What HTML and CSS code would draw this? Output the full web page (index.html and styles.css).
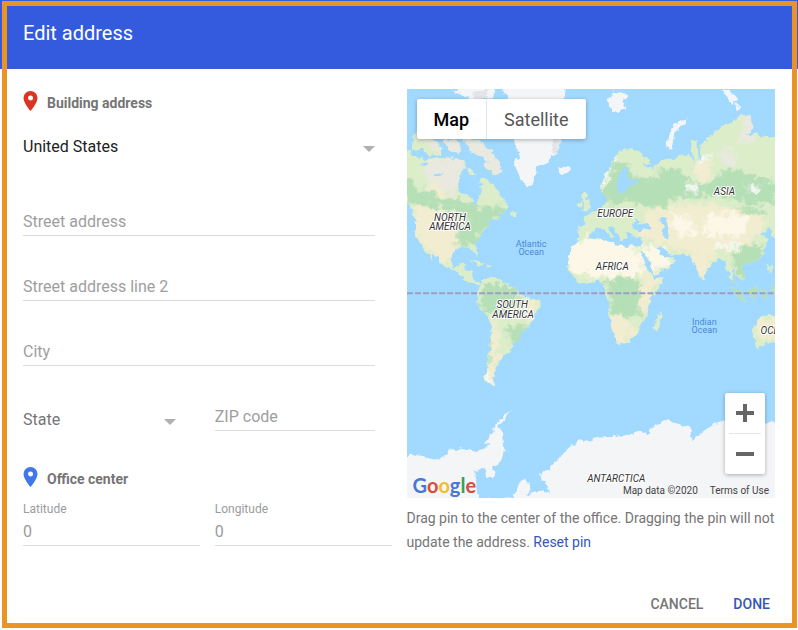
FILE: index.html
```html
<!DOCTYPE html>
<html lang="en">
<head>
<meta charset="utf-8">
<meta name="viewport" content="width=device-width, initial-scale=1">
<title>Edit address</title>
<link rel="stylesheet" href="styles.css">
</head>
<body>
<form class="dialog">
  <header class="dialog-header"><h1>Edit address</h1></header>
  <div class="dialog-body">
    <div class="fields">
      <h2 class="section-title">
        <svg class="pin pin-red" viewBox="0 0 14 20" aria-hidden="true"><path fill-rule="evenodd" d="M7 0a7 7 0 0 0-7 7c0 5 7 13 7 13s7-8 7-13a7 7 0 0 0-7-7Zm0 4.5a2.5 2.5 0 1 1 0 5 2.5 2.5 0 0 1 0-5Z"/></svg>
        Building address
      </h2>
      <div class="select country">
        <select aria-label="Country"><option>United States</option></select>
      </div>
      <div class="address-lines">
        <input class="line-input" type="text" aria-label="Street address" placeholder="Street address">
        <input class="line-input" type="text" aria-label="Street address line 2" placeholder="Street address line 2">
        <input class="line-input" type="text" aria-label="City" placeholder="City">
      </div>
      <div class="pair region">
        <div class="select state">
          <select aria-label="State"><option>State</option></select>
        </div>
        <input class="line-input zip" type="text" aria-label="ZIP code" placeholder="ZIP code">
      </div>
      <h2 class="section-title">
        <svg class="pin pin-blue" viewBox="0 0 14 20" aria-hidden="true"><path fill-rule="evenodd" d="M7 0a7 7 0 0 0-7 7c0 5 7 13 7 13s7-8 7-13a7 7 0 0 0-7-7Zm0 4.5a2.5 2.5 0 1 1 0 5 2.5 2.5 0 0 1 0-5Z"/></svg>
        Office center
      </h2>
      <div class="pair coords">
        <div class="coord"><label for="lat">Latitude</label><input class="line-input" id="lat" type="text" value="0"></div>
        <div class="coord"><label for="lng">Longitude</label><input class="line-input" id="lng" type="text" value="0"></div>
      </div>
    </div>

    <div class="location">
      <div class="map">
        <svg class="map-canvas" viewBox="407 89 368 408" role="img" aria-label="World map">
          <defs>
            <filter id="coast" filterUnits="userSpaceOnUse" x="395" y="77" width="392" height="432">
              <feTurbulence type="fractalNoise" baseFrequency="0.17" numOctaves="2" seed="4"/>
              <feDisplacementMap in="SourceGraphic" scale="7" xChannelSelector="R" yChannelSelector="G"/>
            </filter>
            <filter id="patch" x="-20%" y="-20%" width="140%" height="140%">
              <feGaussianBlur stdDeviation="1.6" result="soft"/>
              <feTurbulence type="fractalNoise" baseFrequency="0.13" numOctaves="3" seed="9" result="n"/>
              <feDisplacementMap in="soft" in2="n" scale="17" xChannelSelector="R" yChannelSelector="G"/>
            </filter>
            <clipPath id="land">
              <path d="M400 153L411 152 415 157 425 159 440 157 455 159 464 160 465 166 459 177 458 188 463 194 470 195 474 204 478 205 479 196 482 190 480 180 483 177 492 182 497 189 500 195 505 200 509 207 502 213 498 214 500 218 492 220 488 225 484 231 480 236 475 243 478 251 476 256 473 248 463 247 455 248 453 253 450 260 453 266 458 267 460 263 465 263 464 269 471 271 472 278 477 282 484 282 478 285 470 282 464 278 457 272 449 267 441 263 436 256 430 248 434 260 427 252 421 244 416 236 416 223 414 213 407 203 400 198Z"/>
              <path d="M480 284L486 278 492 277 500 279 508 284 517 290 523 297 532 298 541 302 540 307 535 313 532 321 528 328 522 332 520 339 515 343 510 351 503 355 499 361 497 367 494 374 493 380 496 386 489 385 485 377 487 370 488 358 490 340 492 326 489 318 483 311 477 303 477 295Z"/>
              <path d="M600 187L603 178 610 168 613 160 618 152 626 149 636 150 646 156 650 163 655 165 662 161 675 158 683 155 688 153 692 158 695 165 692 150 690 141 696 140 697 155 701 162 699 146 706 140 715 132 723 126 733 122 740 113 750 117 752 128 745 135 755 134 765 137 785 137 785 240 771 236 770 228 761 232 766 239 764 252 758 260 748 263 741 267 744 275 741 279 735 276 733 268 731 270 733 280 737 286 731 281 727 271 725 261 718 258 710 265 706 270 704 279 700 279 696 268 692 260 688 255 680 255 671 254 675 260 665 269 653 275 655 278 664 277 660 287 650 297 649 308 646 316 641 323 638 333 630 342 618 345 613 335 609 318 609 300 604 293 605 285 600 281 585 284 575 280 567 270 569 257 571 246 580 239 579 226 587 225 583 218 590 213 600 208 606 201 607 195 602 193Z"/>
              <path d="M583 211L590 209 588 200 585 190 581 195 584 203ZM577 203l5-2v6h-5ZM654 322L661 311 661 319 657 331 653 328ZM731 287L740 292 746 301 738 298ZM747 290L756 285 758 291 752 300ZM760 289h6l-2 3 2 5-4-1ZM751 330L757 320 765 315 790 313 790 341 765 344 756 348ZM767 263l5 5-2 4ZM771 286h10v9h-7ZM470 260l8 1 7 4-7-1ZM486 265h6v3h-5ZM509 212l7 0 0 4-7-1Z"/>
              <path d="M415 132L424 130 432 139 440 145 441 154 430 156 422 149 412 151 412 144ZM444 140L455 138 461 148 458 154 450 150ZM463 138L480 141 487 148 495 155 500 163 502 168 496 176 489 171 484 165 487 160 480 155 470 152ZM466 168l7 1 2 5-6 1Z"/>
            </clipPath>
          </defs>
          <rect class="water" x="407" y="89" width="368" height="408"/>
          <g filter="url(#coast)">
            <g clip-path="url(#land)">
              <rect class="grass" x="395" y="80" width="395" height="320"/>
              <g filter="url(#patch)">
                <path class="tundra" d="M424 160L462 158 463 180 456 196 440 188 427 181ZM408 128h100v45h-40ZM740 112h16v30h-16ZM720 149l16 2-3 14-13-5Z"/>
                <path class="forest" d="M400 176L419 187 445 197 478 206 508 208 500 220 485 230 474 245 456 247 460 225 470 216 436 208 400 198ZM618 160L629 167 634 178 653 179 660 168 681 169 689 182 713 181 730 168 760 176 776 184 776 205 735 201 716 194 673 199 660 207 622 202 606 204 603 187ZM490 282L517 288 522 302 507 313 486 311 478 299ZM607 280L632 279 647 292 648 311 630 320 611 315ZM744 244L764 245 758 265 739 277 732 258ZM729 279h50v23h-50ZM710 208h55v12h-35ZM505 325h25l-10 22-11-6ZM486 340l3 0-1 30-3-2Z"/>
                <path class="sand" d="M412 203L436 209 455 214 459 234 453 262 438 260 418 242ZM645 212L690 203 720 206 768 217 760 234 738 246 707 256 686 254 664 244 638 237ZM692 256l16-2 2 14-6 16-8-10ZM608 314l14-1 14 20-13 12h-12ZM640 275l22-3-10 18-6 26-8-4 3-20ZM490 322l8 0 1 25-4 38-7-1 3-30ZM524 300l15 1-10 22-8-10ZM752 318h27v20h-20ZM430 183l14 5-2 8-12-4ZM697 160l14 2-2 20-14-2Z"/>
                <path class="desert" d="M565 242L603 236 635 247 643 260 648 272 630 276 608 278 586 275 567 272ZM640 245L661 247 673 256 660 270 651 272ZM668 216h24l4 22-20-4ZM705 215l44-1-8 22-34 1Z"/>
                <path class="snow" d="M600 179L611 161 617 153 613 168 604 182ZM716 244l23 0-2 4-23-1ZM485 374l5 0 3 12h-6ZM697 158l12-4 0 5-10 5ZM746 187l14-3-2 7-12 1ZM684 185l14 0-3 5-11 0Z"/>
              </g>
            </g>
            <path class="water" d="M616 193L617 182 622 170 627 167 627 175 632 181 639 181 630 185 624 192ZM588 237L592 232 597 227 603 229 611 238 614 237 608 227 612 226 620 235 621 240 626 238 625 232 631 232 633 236 641 237 641 246 632 246 615 245 606 240 598 238ZM631 228L634 220 639 224 645 222 653 226 648 229 638 230ZM660 218l6-2 2 9-1 12-5-1 1-9ZM640 250l4 1 9 22 1 4-6-6ZM657 246l4 2 9 7 4 1-8 3-6-6ZM644 165l9-1-1 6-6-2ZM421 162l7 1-3 4-5-1ZM434 174l8-2-2 4-6 0Z"/>
            <path class="ice" d="M500 80L566 80 565 95 558 110 560 139 558 150 552 157 545 164 538 167 534 175 532 183 528 186 521 180 518 173 514 164 520 155 517 151 513 139 510 105ZM558 167L562 166 567 165 571 169 566 174 560 174ZM607 98L615 92 628 94 622 101 624 108 617 115 611 109ZM666 146L668 135 675 124 688 117 681 126 674 134 671 149ZM722 88l8 2 6 10-4 5-7-9ZM735 102l6 5-5 4ZM453 91l14-4 28 0-2 10-24 2Z"/>
            <path class="ice-shade" d="M553 134l6 3-1 15-6 1ZM475 90h15l-9 10h-10Z"/>
            <path class="ice" d="M400 457L412 453 425 457 435 459 447 456 449 449 460 448 475 451 486 449 490 442 484 444 492 431 496 424 504 415 511 409 506 417 498 425 503 434 504 448 500 462 492 467 496 474 493 479 486 477 484 470 475 471 477 488 486 497 497 497 508 499 515 492 521 480 527 477 530 487 526 496 535 491 543 490 549 494 547 485 541 480 541 473 550 467 560 456 570 446 579 440 590 440 600 436 625 435 638 432 647 434 655 425 667 420 680 424 690 427 691 440 700 433 712 424 725 421 740 424 790 421 790 515 400 515Z"/>
            <path class="water" d="M477 468l8 1 1 7-8-1ZM490 481l7-3-2 5-6 3ZM476 484L488 486 500 492 512 494 514 499 478 499Z"/>
          </g>
          <path class="equator" d="M407 293H775"/>
          <g class="continent">
            <text x="450" y="221">NORTH</text><text x="450" y="230">AMERICA</text>
            <text x="512" y="308">SOUTH</text><text x="513" y="318">AMERICA</text>
            <text x="615" y="217">EUROPE</text><text x="724" y="195">ASIA</text>
            <text x="612" y="270">AFRICA</text><text x="616" y="481">ANTARCTICA</text>
            <text class="cut" x="760" y="334">OCEANIA</text>
          </g>
          <g class="ocean">
            <text x="531" y="247">Atlantic</text><text x="531" y="255">Ocean</text>
            <text x="704" y="325">Indian</text><text x="704" y="333">Ocean</text>
          </g>
        </svg>
        <div class="map-types">
          <button class="map-type active" type="button">Map</button>
          <button class="map-type" type="button">Satellite</button>
        </div>
        <div class="zoom">
          <button type="button" aria-label="Zoom in"><svg viewBox="0 0 18 18"><path d="M7 0h4v7h7v4h-7v7H7v-7H0V7h7Z"/></svg></button>
          <button type="button" aria-label="Zoom out"><svg viewBox="0 0 18 18"><path d="M0 7h18v4H0Z"/></svg></button>
        </div>
        <div class="brand"><span class="g-blue">G</span><span class="g-red">o</span><span class="g-yellow">o</span><span class="g-blue">g</span><span class="g-green">l</span><span class="g-red">e</span></div>
        <div class="credits"><span>Map data ©2020</span><a href="#">Terms of Use</a></div>
      </div>
      <p class="hint">Drag pin to the center of the office. Dragging the pin will not update the address. <a href="#">Reset pin</a></p>
    </div>
  </div>
  <footer class="actions">
    <button class="action" type="button">CANCEL</button>
    <button class="action primary" type="submit">DONE</button>
  </footer>
</form>
</body>
</html>
```

FILE: styles.css
```css
* { box-sizing: border-box; }

body {
  margin: 0;
  padding: 1px 1px 2px 2px;
  background: linear-gradient(#345bdd 69px, #fff 69px);
  color: #757575;
  font-family: Roboto, "Liberation Sans", sans-serif;
  font-size: 16px;
}

button, input, select { font: inherit; color: inherit; }
button { border: 0; padding: 0; background: none; cursor: pointer; }
h1, h2, p { margin: 0; }

.dialog {
  display: flex;
  flex-direction: column;
  min-height: calc(100vh - 3px);
  border: 5px solid #e99423;
  background: #fff;
}

.dialog-header {
  padding: 15px 16px 24px;
  background: #345bdd;
  color: #fff;
}
.dialog-header h1 { font-size: 20px; font-weight: 400; line-height: 24px; }

.dialog-body {
  display: grid;
  grid-template-columns: 1fr 1fr;
  gap: 15px;
  padding: 20px 17px 0 16px;
}

.section-title {
  display: flex;
  align-items: center;
  gap: 9px;
  height: 28px;
  font-size: 14px;
  font-weight: 700;
}
.pin { width: 15px; height: 20px; margin-bottom: 4px; }
.pin-red { fill: #db3422; }
.pin-blue { fill: #3f78ea; }

.select { position: relative; }
.select select {
  display: block;
  width: 100%;
  height: 34px;
  padding: 0;
  border: 0;
  background: none;
  appearance: none;
}
.select::after {
  content: "";
  position: absolute;
  right: 0;
  top: 17px;
  border: 6px solid transparent;
  border-top-color: #b0b0b0;
  border-bottom: 0;
  pointer-events: none;
}
.country { margin: 12px 17px 44px 0; color: #212121; }
.state { margin-right: 24px; }

.line-input {
  display: block;
  width: 100%;
  height: 29px;
  padding: 0;
  border: 0;
  border-bottom: 1px solid #dcdcdc;
  border-radius: 0;
  background: none;
  color: #9b9b9b;
}
.line-input::placeholder { color: #9e9e9e; opacity: 1; }

.address-lines {
  display: grid;
  gap: 36px;
  margin-right: 17px;
}

.pair {
  display: grid;
  grid-template-columns: 1fr 1fr;
  gap: 15px;
}
.region { margin: 36px 0 29px; }
.zip { width: auto; min-width: 0; margin-right: 17px; }
.coords { margin-top: 8px; }
.coord label {
  display: block;
  color: #9b9b9b;
  font-size: 12px;
  line-height: 16px;
}

.map { position: relative; overflow: hidden; }
.map-canvas { display: block; width: 100%; }
.water { fill: #a2daff; }
.grass { fill: #dcedca; }
.tundra { fill: #e9e9df; }
.forest { fill: #b5dfb6; }
.sand { fill: #f2ecd0; }
.desert { fill: #fcf7e7; }
.snow { fill: #f8faf6; }
.ice { fill: #f4f5f6; }
.ice-shade { fill: #e3e5e7; }
.equator { stroke: #9c9fc2; stroke-width: 2px; stroke-dasharray: 6px 2px; }
.continent {
  fill: #333;
  stroke: #fff;
  stroke-width: 2px;
  stroke-linejoin: round;
  paint-order: stroke;
  font-size: 10px;
  font-style: italic;
  text-anchor: middle;
}
.continent .cut { text-anchor: start; }
.ocean { fill: #4a88d6; font-size: 9px; text-anchor: middle; }

.map-types {
  position: absolute;
  top: 10px;
  left: 10px;
  display: flex;
  height: 40px;
  background: #fff;
  border-radius: 2px;
  box-shadow: 0 1px 4px rgba(0, 0, 0, 0.3);
}
.map-type { padding: 0 17px; color: #565656; font-size: 18px; }
.map-type + .map-type { border-left: 1px solid #e6e6e6; }
.map-type.active { color: #000; font-weight: 500; }

.zoom {
  position: absolute;
  right: 10px;
  bottom: 24px;
  display: grid;
  width: 40px;
  padding: 0 4px;
  background: #fff;
  border-radius: 2px;
  box-shadow: 0 1px 4px rgba(0, 0, 0, 0.3);
}
.zoom button { display: grid; place-items: center; height: 40px; }
.zoom button + button { height: 41px; border-top: 1px solid #e6e6e6; }
.zoom svg { width: 18px; height: 18px; fill: #666; }

.brand {
  position: absolute;
  left: 6px;
  bottom: 0;
  font-family: Lato, sans-serif;
  font-size: 20px;
  font-weight: 700;
  line-height: 26px;
}
.g-blue { color: #4777d9; }
.g-red { color: #dc4a3c; }
.g-yellow { color: #eebf2e; }
.g-green { color: #35a052; }

.credits {
  position: absolute;
  right: 6px;
  bottom: 0;
  display: flex;
  gap: 12px;
  color: #444;
  font-size: 10px;
  line-height: 14px;
}
.credits a { color: inherit; text-decoration: none; }

.hint { margin-top: 8px; font-size: 14px; line-height: 24px; }
.hint a { color: #3457b8; text-decoration: none; }

.actions {
  display: flex;
  justify-content: flex-end;
  gap: 30px;
  margin-top: auto;
  padding: 0 22px 1px;
}
.action { height: 36px; font-size: 14px; font-weight: 500; }
.action.primary { color: #3457b8; }
```
